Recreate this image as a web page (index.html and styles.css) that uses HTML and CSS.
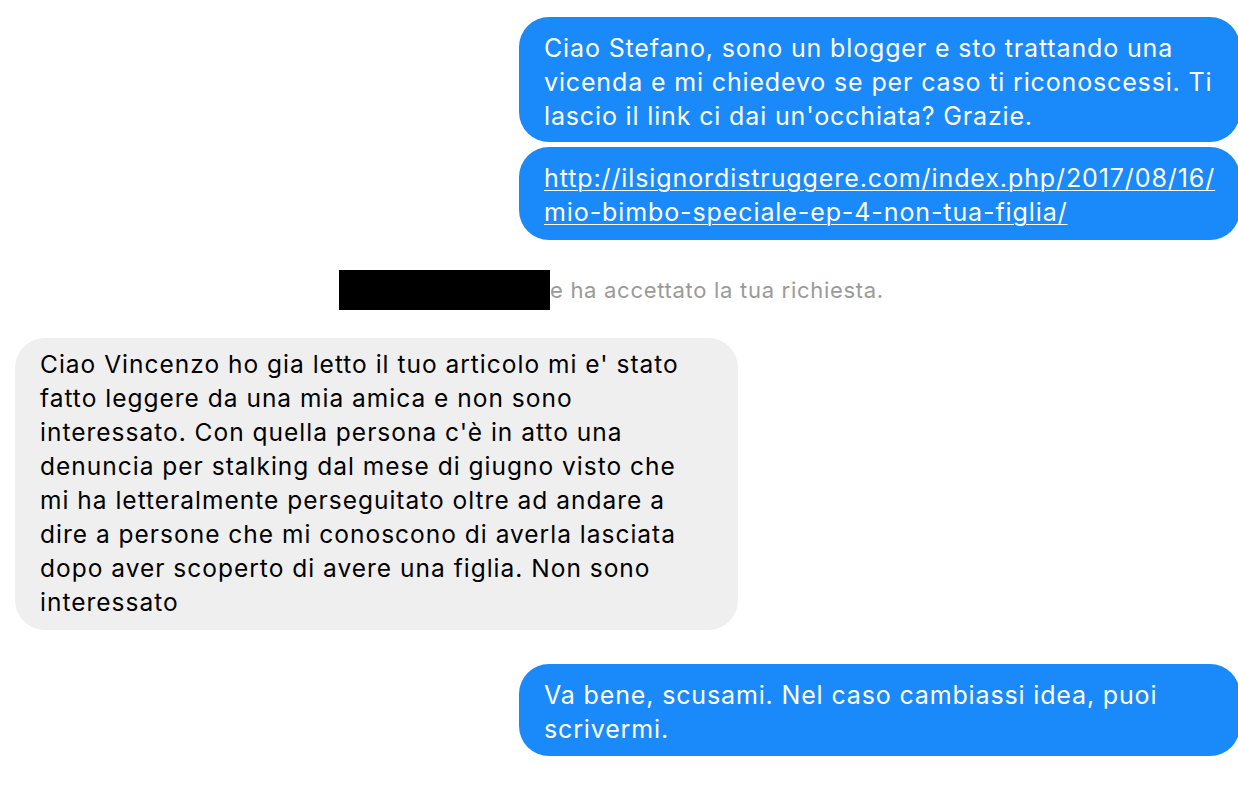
FILE: index.html
```html
<!DOCTYPE html>
<html>
<head>
    <meta charset="utf-8">
    <link rel="stylesheet" href="styles.css">
</head>
<body>
    <div class="thread">
        <div class="row row-out">
            <div class="bubble bubble-out">Ciao Stefano, sono un blogger e sto trattando una<br>vicenda e mi chiedevo se per caso ti riconoscessi. Ti<br>lascio il link ci dai un'occhiata? Grazie.</div>
        </div>
        <div class="row row-out row-joined">
            <div class="bubble bubble-out bubble-link"><a class="link" href="#">http://ilsignordistruggere.com/index.php/2017/08/16/<br>mio-bimbo-speciale-ep-4-non-tua-figlia/</a></div>
        </div>
        <div class="row row-system">
            <span class="redacted"></span><span class="system-text">e ha accettato la tua richiesta.</span>
        </div>
        <div class="row row-in">
            <div class="bubble bubble-in">Ciao Vincenzo ho gia letto il tuo articolo mi e' stato<br>fatto leggere da una mia amica e non sono<br>interessato. Con quella persona c'è in atto una<br>denuncia per stalking dal mese di giugno visto che<br>mi ha letteralmente perseguitato oltre ad andare a<br>dire a persone che mi conoscono di averla lasciata<br>dopo aver scoperto di avere una figlia. Non sono<br>interessato</div>
        </div>
        <div class="row row-out row-last">
            <div class="bubble bubble-out bubble-end">Va bene, scusami. Nel caso cambiassi idea, puoi<br>scrivermi.</div>
        </div>
    </div>
</body>
</html>
```

FILE: styles.css
```css
html, body
{
    margin: 0;
    padding: 0;
    background: #ffffff;
}
body
{
    font-family: Inter, Roboto, "Noto Sans", sans-serif;
    overflow: hidden;
}
.thread
{
    padding-top: 17px;
    display: flex;
    flex-direction: column;
}
.row
{
    display: flex;
}
.row-out
{
    justify-content: flex-end;
}
.row-joined
{
    margin-top: 5px;
}
.row-system
{
    margin-top: 30px;
    height: 40px;
    align-items: center;
    padding-left: 339px;
}
.row-in
{
    margin-top: 28px;
    padding-left: 15px;
}
.row-last
{
    margin-top: 34px;
}
.bubble
{
    font-size: 25px;
    line-height: 34px;
    letter-spacing: 0.85px;
    border-radius: 30px;
    white-space: nowrap;
    box-sizing: border-box;
}
.bubble-out
{
    background: #1a89fa;
    color: #ffffff;
    width: 721px;
    margin-right: -2px;
    padding: 14px 25px 9px 25px;
}
.bubble-link
{
    padding-bottom: 11px;
    letter-spacing: 0.9px;
}
.bubble-end
{
    padding-bottom: 10px;
}
.bubble-in
{
    background: #f0eff0;
    color: #000000;
    width: 723px;
    padding: 9px 25px 11px 25px;
    font-size: 24.5px;
    letter-spacing: 1px;
}
.link
{
    color: #ffffff;
    text-decoration: underline;
    text-decoration-thickness: 1px;
    text-underline-offset: 3px;
}
.redacted
{
    display: inline-block;
    width: 211px;
    height: 40px;
    background: #000000;
}
.system-text
{
    font-size: 22px;
    letter-spacing: 0.7px;
    color: #9a9a9a;
}
```
